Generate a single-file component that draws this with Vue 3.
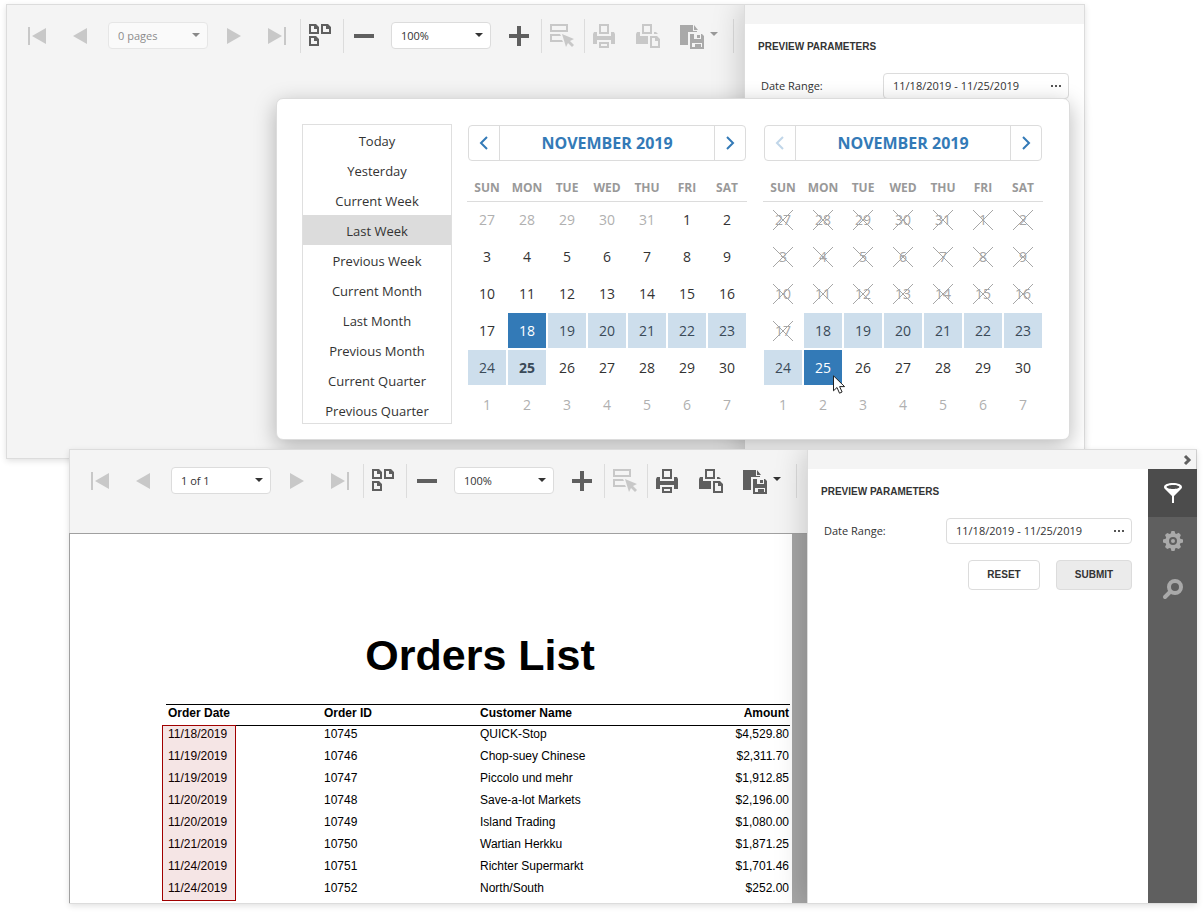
<script setup>
const docPath = (x, y) =>
  `M${x} ${y}h7l3 3v7h-10zM${x + 2} ${y + 2}v6h6v-3h-3v-3z`

const icons = {
  first: 'M2 3h2v18H2zM20 4v16L6 12z',
  prev: 'M18 4v16L4 12z',
  next: 'M4 4v16l14-8z',
  last: 'M18 3h2v18h-2zM2 4v16l14-8z',
  multipage: docPath(0, 0) + docPath(12, 0) + docPath(0, 12),
  zoomOut: 'M2 10h20v4H2z',
  zoomIn: 'M2 10h8V2h4v8h8v4h-8v8h-4v-8H2z',
  highlight:
    'M0 0h18v8H0zM2 2v4h14V2zM0 10h10l1 2H2v4h10l1 2H0zM12 10l12 5-4 2 4 4-2 2-4-4-2 4z',
  print:
    'M6 0h10v10H6zM8 2v6h6V2zM1 8h3v4h14V8h3l1 2v10h-4v-4H4v4H0V10zM6 18h10v6H6zM8 20v2h6v-2z',
  printPage:
    'M6 0h10v10H6zM8 2v6h6V2zM1 8h3v4h8v8H0V10zM18 8h2l2 2h-4zM14 12h7l3 3v9H14zM16 14v8h6v-5h-3v-3z',
  exportTo:
    'M1 1h13v6h4v1H9v13H1zM15 1l4 5h-4zM11 10h12l2 2v13H11zM13 18v5h10v-5zM15 10v5h7v-5zM18 11h3v3h-3zM16 20h6v3h-6zM13 18h10v1H13z'
}

const viewers = [
  { id: 'picker', pages: '0 pages', loaded: false },
  { id: 'report', pages: '1 of 1', loaded: true }
]

const presets = [
  'Today', 'Yesterday', 'Current Week', 'Last Week', 'Previous Week',
  'Current Month', 'Last Month', 'Previous Month', 'Current Quarter', 'Previous Quarter'
]
const weekdays = ['SUN', 'MON', 'TUE', 'WED', 'THU', 'FRI', 'SAT']

function buildWeeks(isEnd) {
  const weeks = []
  for (let w = 0; w < 6; w++) {
    const week = []
    for (let d = 0; d < 7; d++) {
      const offset = w * 7 + d - 4
      const inMonth = offset >= 1 && offset <= 30
      const day = offset < 1 ? 31 + offset : offset > 30 ? offset - 30 : offset
      week.push({
        day,
        key: offset,
        cursor: isEnd && offset === 25,
        classes: {
          other: !inMonth,
          range: offset >= 18 && offset <= 25,
          selected: offset === (isEnd ? 25 : 18),
          strong: !isEnd && offset === 25,
          blocked: isEnd && offset < 18
        }
      })
    }
    weeks.push(week)
  }
  return weeks
}
const calendars = [
  { id: 'start', weeks: buildWeeks(false), prevDisabled: false },
  { id: 'end', weeks: buildWeeks(true), prevDisabled: true }
]

const orders = [
  ['11/18/2019', '10745', 'QUICK-Stop', '$4,529.80'],
  ['11/19/2019', '10746', 'Chop-suey Chinese', '$2,311.70'],
  ['11/19/2019', '10747', 'Piccolo und mehr', '$1,912.85'],
  ['11/20/2019', '10748', 'Save-a-lot Markets', '$2,196.00'],
  ['11/20/2019', '10749', 'Island Trading', '$1,080.00'],
  ['11/21/2019', '10750', 'Wartian Herkku', '$1,871.25'],
  ['11/24/2019', '10751', 'Richter Supermarkt', '$1,701.46'],
  ['11/24/2019', '10752', 'North/South', '$252.00']
]
</script>

<template>
  <main class="desktop">
    <section v-for="v in viewers" :key="v.id" class="window" :class="v.id">
      <div class="viewer">
        <div class="main">
          <div class="toolbar">
            <button class="tool off" disabled aria-label="First page"><svg viewBox="0 0 24 24"><path :d="icons.first" /></svg></button>
            <button class="tool off" disabled aria-label="Previous page"><svg viewBox="0 0 24 24"><path :d="icons.prev" /></svg></button>
            <div class="combo" :class="{ faded: !v.loaded }">
              <select :disabled="!v.loaded" aria-label="Page"><option>{{ v.pages }}</option></select>
              <svg class="caret" viewBox="0 0 8 4"><path d="M0 0h8L4 4z" /></svg>
            </div>
            <button class="tool off" disabled aria-label="Next page"><svg viewBox="0 0 24 24"><path :d="icons.next" /></svg></button>
            <button class="tool off" disabled aria-label="Last page"><svg viewBox="0 0 24 24"><path :d="icons.last" /></svg></button>
            <span class="sep"></span>
            <button class="tool" aria-label="Multipage"><svg viewBox="0 0 24 24"><path fill-rule="evenodd" :d="icons.multipage" /></svg></button>
            <span class="sep"></span>
            <button class="tool" aria-label="Zoom out"><svg viewBox="0 0 24 24"><path :d="icons.zoomOut" /></svg></button>
            <div class="combo zoom">
              <select aria-label="Zoom"><option>100%</option></select>
              <svg class="caret" viewBox="0 0 8 4"><path d="M0 0h8L4 4z" /></svg>
            </div>
            <button class="tool" aria-label="Zoom in"><svg viewBox="0 0 24 24"><path :d="icons.zoomIn" /></svg></button>
            <span class="sep"></span>
            <button class="tool off" disabled aria-label="Highlight fields"><svg viewBox="0 0 24 24"><path fill-rule="evenodd" :d="icons.highlight" /></svg></button>
            <span class="sep"></span>
            <button class="tool" :class="{ off: !v.loaded }" :disabled="!v.loaded" aria-label="Print"><svg viewBox="0 0 24 24"><path fill-rule="evenodd" :d="icons.print" /></svg></button>
            <button class="tool" :class="{ off: !v.loaded }" :disabled="!v.loaded" aria-label="Print page"><svg viewBox="0 0 24 24"><path fill-rule="evenodd" :d="icons.printPage" /></svg></button>
            <button class="tool export" :class="{ dim: !v.loaded }" :disabled="!v.loaded" aria-label="Export to">
              <svg viewBox="0 0 40 24">
                <path fill-rule="evenodd" :d="icons.exportTo" />
                <path class="arrow" d="M31 8h8l-4 4z" />
              </svg>
            </button>
            <span class="sep end"></span>
          </div>

          <div v-if="v.loaded" class="document">
            <article class="page">
              <h1>Orders List</h1>
              <div class="orders">
                <table>
                  <thead>
                    <tr><th>Order Date</th><th>Order ID</th><th>Customer Name</th><th>Amount</th></tr>
                  </thead>
                  <tbody>
                    <tr v-for="o in orders" :key="o[1]"><td v-for="c in o" :key="c">{{ c }}</td></tr>
                  </tbody>
                </table>
                <div class="mark"></div>
              </div>
            </article>
          </div>
        </div>

        <aside class="panel">
          <div class="panel-head">
            <button v-if="v.loaded" class="collapse" aria-label="Collapse panel">
              <svg viewBox="0 0 8 10"><path d="M2 1l4 4-4 4" /></svg>
            </button>
          </div>
          <div class="panel-body">
            <form class="params" @submit.prevent>
              <h2>PREVIEW PARAMETERS</h2>
              <div class="row">
                <label :for="'range-' + v.id">Date Range:</label>
                <div class="field">
                  <input :id="'range-' + v.id" type="text" value="11/18/2019 - 11/25/2019" />
                  <button type="button" aria-label="Choose dates">
                    <svg viewBox="0 0 10 2"><path d="M0 0h2v2H0zM4 0h2v2H4zM8 0h2v2H8z" /></svg>
                  </button>
                </div>
              </div>
              <div v-if="v.loaded" class="actions">
                <button type="button" class="reset">RESET</button>
                <button type="submit" class="submit">SUBMIT</button>
              </div>
            </form>
            <nav v-if="v.loaded" class="tabs" aria-label="Panel tabs">
              <button class="tab active" aria-label="Parameters">
                <svg viewBox="0 0 20 20">
                  <path fill-rule="evenodd" d="M10 0c5 0 9 1.600 9 4 0 1-.6 1.800-1.500 2.600L11 13v7H9v-7L2.500 6.600C1.600 5.800 1 5 1 4c0-2.400 4-4 9-4zM10 2C6.500 2 3.500 3 3.500 4s3 2 6.500 2 6.500-1 6.500-2-3-2-6.500-2z" />
                </svg>
              </button>
              <button class="tab" aria-label="Export options">
                <svg viewBox="0 0 20 20">
                  <path fill-rule="evenodd" d="M8.500 0h3l.8 2.600 1 .4 2.400-1.200 2.200 2.200L16.800 6.500l.5 1.200 2.700.8v3l-2.700.8-.5 1.200 1.200 2.400-2.200 2.200-2.400-1.200-1.100.4-.8 2.700h-3l-.8-2.700-1.100-.4-2.400 1.200L2 15.900l1.200-2.400-.5-1.200L0 11.500v-3l2.700-.8.5-1.200L2 4.100l2.200-2.200 2.400 1.200 1.100-.5zM10 6a4 4 0 1 0 0 8 4 4 0 0 0 0-8z" />
                  <circle cx="10" cy="10" r="2" />
                </svg>
              </button>
              <button class="tab" aria-label="Search">
                <svg viewBox="0 0 20 20">
                  <circle class="ring" cx="12" cy="8" r="6" />
                  <path class="handle" d="M7.500 12.500L2 18" />
                </svg>
              </button>
            </nav>
          </div>
        </aside>
      </div>

      <div v-if="!v.loaded" class="popup" role="dialog" aria-label="Date range">
        <ul class="presets">
          <li v-for="p in presets" :key="p"><button :class="{ current: p === 'Last Week' }">{{ p }}</button></li>
        </ul>
        <div v-for="c in calendars" :key="c.id" class="calendar">
          <div class="cal-head">
            <button aria-label="Previous month" :disabled="c.prevDisabled"><svg viewBox="0 0 8 12"><path d="M7 0L1 6l6 6" /></svg></button>
            <button class="month">NOVEMBER 2019</button>
            <button aria-label="Next month"><svg viewBox="0 0 8 12"><path d="M1 0l6 6-6 6" /></svg></button>
          </div>
          <table>
            <thead><tr><th v-for="d in weekdays" :key="d">{{ d }}</th></tr></thead>
            <tbody>
              <tr v-for="(w, i) in c.weeks" :key="i">
                <td v-for="d in w" :key="d.key">
                  <button class="day" :class="d.classes" :disabled="d.classes.blocked">
                    {{ d.day }}
                    <svg v-if="d.classes.blocked" class="cross" viewBox="0 0 20 20"><path d="M0 0l20 20M20 0L0 20" /></svg>
                    <svg v-if="d.cursor" class="cursor" viewBox="0 0 13 19"><path d="M.5.800v15l3.500-3.300 2.500 5.700 2.600-1.200-2.500-5.400h5z" /></svg>
                  </button>
                </td>
              </tr>
            </tbody>
          </table>
        </div>
      </div>
    </section>
  </main>
</template>

<style>
body {
  background: #fff;
}
</style>

<style scoped>
.desktop {
  display: flex;
  flex-direction: column;
  padding: 4px 6px 8px;
  font-family: "Open Sans", "Noto Sans", sans-serif;
  font-size: 11px;
  color: #333;
}
.desktop *,
.desktop {
  box-sizing: border-box;
}
button {
  font: inherit;
  color: inherit;
  padding: 0;
  border: 0;
  background: none;
}
svg {
  display: block;
  fill: currentColor;
  overflow: visible;
}
.window {
  position: relative;
  display: flex;
  min-height: 455px;
  border: 1px solid #dcdcdc;
  background: #f4f4f4;
  box-shadow: 0 2px 6px rgba(0, 0, 0, 0.12);
}
.picker {
  margin-right: 112px;
}
.report {
  margin: -10px 0 0 63px;
}
.viewer {
  flex: 1;
  display: flex;
  min-width: 0;
}
.main {
  flex: 1;
  min-width: 0;
  display: flex;
  flex-direction: column;
}

/* Toolbar */
.toolbar {
  display: flex;
  align-items: flex-start;
  padding: 14px 0 35px 10px;
}
.tool {
  flex: none;
  width: 43px;
  height: 34px;
  padding: 0 10px 0 9px;
  color: #5f5f5f;
}
.tool svg {
  width: 24px;
  height: 24px;
}
.tool.off {
  color: #c8c8c8;
}
.tool.dim {
  color: #a9a9a9;
}
.tool.export {
  width: 59px;
}
.tool.export svg {
  width: 40px;
}
.arrow {
  fill: #333;
}
.dim .arrow {
  fill: #999;
}
.sep {
  flex: none;
  width: 1px;
  height: 34px;
  margin-right: -1px;
  background: #dcdcdc;
}
.sep.end {
  margin-left: 4px;
}
.combo {
  position: relative;
  flex: none;
  width: 100px;
  margin: 3px 6px 0 5px;
}
.combo.zoom {
  margin-right: 7px;
}
.combo select {
  display: block;
  appearance: none;
  width: 100%;
  height: 27px;
  padding: 0 20px 0 9px;
  border: 1px solid #dcdcdc;
  border-radius: 4px;
  background: #fff;
  font: inherit;
  color: #333;
  opacity: 1;
}
.faded {
  opacity: 0.55;
}
.caret {
  position: absolute;
  right: 8px;
  top: 11px;
  width: 8px;
  height: 4px;
  pointer-events: none;
}

/* Report page */
.document {
  flex: 1;
  margin-left: -1px;
  padding-right: 15px;
  border-top: 1px solid #a0a0a0;
  border-left: 1px solid #a0a0a0;
  background: #a6a6a6;
}
.page {
  height: 100%;
  padding: 97px 2px 0 96px;
  background: #fff;
  font-family: "Liberation Sans", Arial, sans-serif;
  color: #000;
}
.page h1 {
  margin: 0 0 25px;
  padding-left: 4px;
  font-size: 43px;
  line-height: 48px;
  text-align: center;
}
.orders {
  position: relative;
}
.orders table {
  width: 100%;
  table-layout: fixed;
  border-collapse: separate;
  border-spacing: 0;
  font-size: 12px;
  line-height: 16px;
}
.orders th,
.orders td {
  padding: 0 2px 6px;
  text-align: left;
}
.orders th {
  padding-bottom: 4px;
  border: solid #000;
  border-width: 1px 0;
}
.orders th:last-child,
.orders td:last-child {
  padding-right: 1px;
  text-align: right;
}
.mark {
  position: absolute;
  left: -4px;
  top: 21px;
  bottom: 1px;
  width: 74px;
  border: 1px solid #a00000;
  background: rgba(160, 0, 0, 0.1);
}

/* Side panel */
.panel {
  flex: 0 0 340px;
  display: flex;
  flex-direction: column;
  border-left: 1px solid #dcdcdc;
  background: #fff;
  box-shadow: 0 0 30px rgba(0, 0, 0, 0.22);
  clip-path: inset(0 0 0 -40px);
}
.report .panel {
  flex-basis: 389px;
  clip-path: inset(0 -1px 0 -40px);
}
.panel-head {
  display: flex;
  align-items: center;
  justify-content: flex-end;
  height: 19px;
  padding-right: 5px;
  background: #f4f4f4;
}
.collapse svg {
  width: 8px;
  height: 10px;
  fill: none;
  stroke: #5f5f5f;
  stroke-width: 3;
}
.panel-body {
  flex: 1;
  display: flex;
}
.params {
  flex: 1;
  padding: 15px 15px 0 13px;
}
.report .params {
  padding-right: 16px;
}
.params h2 {
  margin: 0 0 18px;
  font: bold 10px/16px "Liberation Sans", Arial, sans-serif;
}
.row {
  display: flex;
  align-items: center;
  justify-content: space-between;
  padding-left: 3px;
}
.row label {
  padding-bottom: 2px;
}
.field {
  display: flex;
  width: 186px;
  height: 26px;
  border: 1px solid #dcdcdc;
  border-radius: 4px;
  background: #fff;
}
.field input {
  flex: 1;
  min-width: 0;
  padding: 0 0 2px 9px;
  border: 0;
  background: none;
  font: inherit;
  color: inherit;
}
.field button {
  width: 24px;
  padding-left: 7px;
  color: #555;
}
.field svg {
  width: 10px;
  height: 2px;
}
.actions {
  display: flex;
  justify-content: flex-end;
  gap: 16px;
  margin-top: 16px;
}
.actions button {
  height: 30px;
  border: 1px solid #dcdcdc;
  border-radius: 4px;
  font: bold 10px/16px "Liberation Sans", Arial, sans-serif;
}
.reset {
  width: 72px;
}
.actions .submit {
  width: 76px;
  background: #ebebeb;
}
.tabs {
  flex: none;
  width: 49px;
  margin-right: -1px;
  background: #5f5f5f;
}
.tab {
  display: flex;
  align-items: center;
  justify-content: center;
  width: 100%;
  height: 48px;
  color: #a9a9a9;
}
.tab.active {
  background: #4c4c4c;
  color: #fff;
}
.tab svg {
  width: 20px;
  height: 20px;
}
.ring {
  fill: none;
  stroke: currentColor;
  stroke-width: 4;
}
.handle {
  stroke: currentColor;
  stroke-width: 4;
  stroke-linecap: round;
}

/* Date range popup */
.popup {
  position: absolute;
  top: 93px;
  right: 14px;
  display: flex;
  width: 794px;
  padding: 25px 26px 15px 25px;
  border: 1px solid #dcdcdc;
  border-radius: 7px;
  background: #fff;
  box-shadow: 0 6px 22px rgba(0, 0, 0, 0.28);
}
.presets {
  flex: none;
  width: 150px;
  height: 300px;
  margin: 0 15px 0 0;
  padding: 0;
  overflow: hidden;
  border: 1px solid #dfdfdf;
  list-style: none;
}
.presets button {
  display: block;
  width: 100%;
  height: 30px;
  padding-top: 2px;
  font-size: 13px;
}
.presets .current {
  background: #dcdcdc;
}
.calendar {
  flex: 1;
  padding-top: 1px;
}
.calendar + .calendar {
  margin-left: 16px;
}
.cal-head {
  display: flex;
  height: 36px;
  margin: 0 1px 12px;
  border: 1px solid #dcdcdc;
  border-radius: 4px;
  color: #337ab7;
}
.cal-head button {
  display: flex;
  align-items: center;
  justify-content: center;
  width: 30px;
}
.cal-head .month {
  flex: 1;
  border: solid #dcdcdc;
  border-width: 0 1px;
  font-size: 16px;
  font-weight: bold;
}
.cal-head svg {
  width: 8px;
  height: 12px;
  fill: none;
  stroke: currentColor;
  stroke-width: 2;
}
.cal-head button:disabled {
  opacity: 0.3;
}
.calendar table {
  width: 100%;
  table-layout: fixed;
  border-collapse: separate;
  border-spacing: 0;
}
.calendar th {
  height: 29px;
  padding: 2px 0 0;
  border-bottom: 1px solid #dcdcdc;
  font-size: 12px;
  line-height: 16px;
  color: #999;
}
.calendar td {
  padding: 0 1px 2px;
}
.day {
  position: relative;
  display: flex;
  align-items: center;
  justify-content: center;
  width: 100%;
  height: 35px;
  font-size: 14px;
  color: #333;
}
.day.other,
.day.blocked {
  color: #b0b0b0;
}
.day.blocked {
  color: #a6a6a6;
}
.day.range {
  background: #cddeec;
  color: #3a4a58;
}
.day.selected {
  background: #337ab7;
  color: #fff;
}
.day.strong {
  font-weight: bold;
}
.cross {
  position: absolute;
  left: 9px;
  top: 8px;
  width: 20px;
  height: 20px;
  stroke: #a6a6a6;
}
.cursor {
  position: absolute;
  left: 29px;
  top: 25px;
  z-index: 1;
  width: 13px;
  height: 19px;
  fill: #fff;
  stroke: #222;
}
</style>
